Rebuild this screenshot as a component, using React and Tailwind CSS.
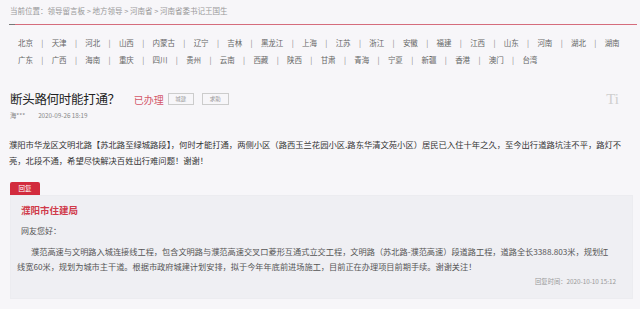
const provinces = [
  ["北京", "天津", "河北", "山西", "内蒙古", "辽宁", "吉林", "黑龙江", "上海", "江苏", "浙江", "安徽", "福建", "江西", "山东", "河南", "湖北", "湖南"],
  ["广东", "广西", "海南", "重庆", "四川", "贵州", "云南", "西藏", "陕西", "甘肃", "青海", "宁夏", "新疆", "香港", "澳门", "台湾"],
];

const font = {
  fontFamily: '"Noto Sans CJK SC", "Liberation Sans", sans-serif',
};

export default function App() {
  return (
    <div className="w-[640px] h-[309px] overflow-hidden bg-[#f7f6f9] text-[#333]" style={font}>
      {/* breadcrumb */}
      <div className="pt-[6px] pl-[10px] text-[7.5px] leading-[10px] text-[#999]">
        当前位置：领导留言板 &gt; 地方领导 &gt; 河南省 &gt; 河南省委书记王国生
      </div>
      <div className="mt-[8px] ml-[9px] mr-[3px] h-px bg-[#d56c7c] flex">
        <div className="w-[6px] h-px bg-[#777]" />
      </div>

      {/* provinces */}
      <div className="mt-[9px] pl-[18px]">
        {provinces.map((row, i) => (
          <div key={i} className="flex items-center h-[17px] text-[7.5px] text-[#666]">
            {row.map((p, j) => (
              <span key={p} className="flex items-center">
                <span>{p}</span>
                {j < row.length - 1 && <span className="mx-[8.3px] text-[#888]">|</span>}
              </span>
            ))}
          </div>
        ))}
      </div>

      {/* title */}
      <div className="mt-[21px] flex items-center h-[20px] pl-[10px] pr-[10px]">
        <h1 className="text-[12.5px] font-normal text-[#222] tracking-[-0.3px]">断头路何时能打通？</h1>
        <span className="ml-[14px] text-[10px] text-[#d4566a]">已办理</span>
        <span className="ml-[4px] w-[26px] h-[12px] border border-[#ccc] flex items-center justify-center text-[5.5px] text-[#999]">城建</span>
        <span className="ml-[8px] w-[27px] h-[12px] border border-[#ccc] flex items-center justify-center text-[5.5px] text-[#999]">求助</span>
        <span className="ml-auto mr-[11px] text-[15px] text-[#cfcfcf]" style={{ fontFamily: '"Liberation Serif", serif' }}>
          Ti
        </span>
      </div>

      {/* meta */}
      <div className="mt-[2px] h-[10px] flex items-center pl-[10px] text-[6.3px] text-[#888]">
        <span>海***</span>
        <span className="ml-[13px]">2020-09-26 18:19</span>
      </div>

      {/* question */}
      <p className="mt-[15px] pl-[9px] w-[634px] text-[8.3px] leading-[16px] text-[#333]">
        濮阳市华龙区文明北路【苏北路至绿城路段】，何时才能打通，两侧小区（路西玉兰花园小区.路东华清文苑小区）居民已入住十年之久，至今出行道路坑洼不平，路灯不亮，北段不通，希望尽快解决百姓出行难问题！谢谢！
      </p>

      {/* reply */}
      <div className="mt-[14px] pl-[10px] pr-[7px]">
        <div className="w-[30px] h-[13px] bg-[#d22b3d] rounded-t-[2px] flex items-center justify-center text-[6.5px] text-white">
          回复
        </div>
        <div className="h-[104px] bg-[#efeff3] border border-[#ececf0] pl-[10px] pr-[16px] pt-[7px]">
          <div className="text-[9.5px] leading-[14px] font-bold text-[#d03a4a]">濮阳市住建局</div>
          <div className="mt-[7px] text-[8px] leading-[14px] text-[#555]">网友您好：</div>
          <p className="mt-[6px] -ml-[4px] indent-[14px] text-[8.2px] leading-[15px] text-[#555]">
            濮范高速与文明路入城连接线工程，包含文明路与濮范高速交叉口菱形互通式立交工程，文明路（苏北路-濮范高速）段道路工程，道路全长3388.803米，规划红线宽60米，规划为城市主干道。根据市政府城建计划安排，拟于今年年底前进场施工，目前正在办理项目前期手续。谢谢关注！
          </p>
          <div className="mt-[2px] text-right text-[6.3px] leading-[12px] text-[#999]">回复时间：2020-10-10 15:12</div>
        </div>
      </div>
    </div>
  );
}
